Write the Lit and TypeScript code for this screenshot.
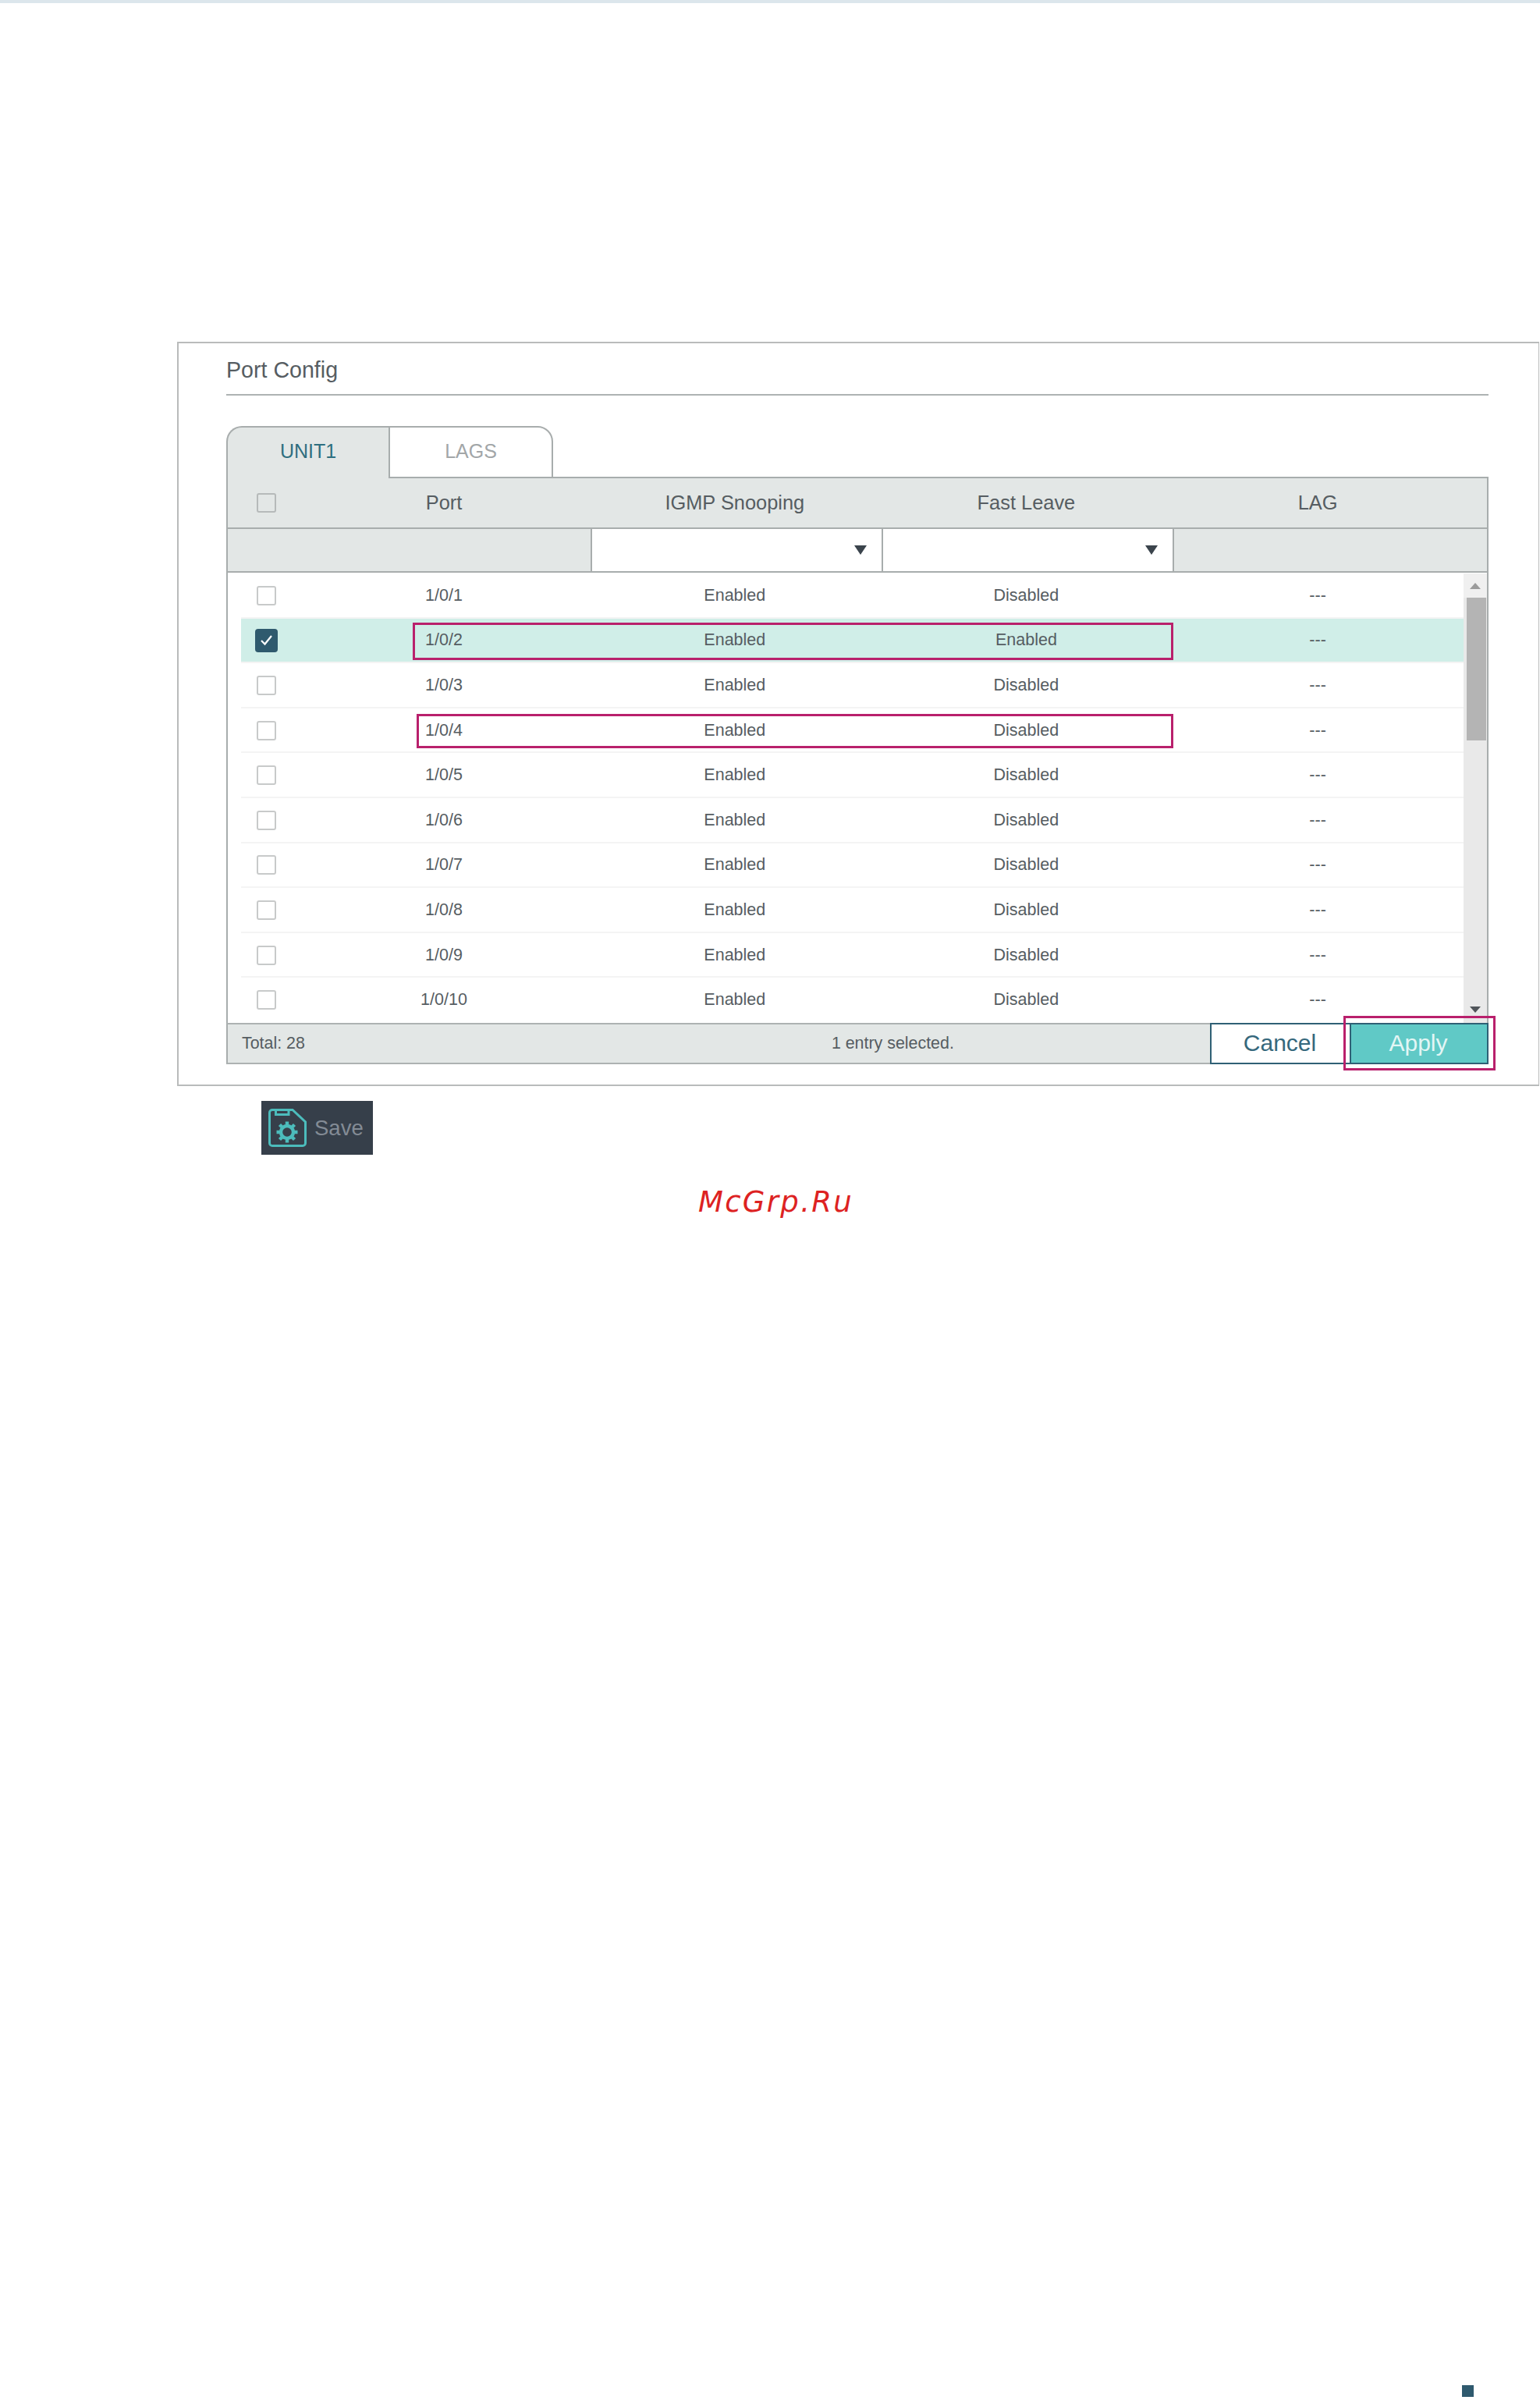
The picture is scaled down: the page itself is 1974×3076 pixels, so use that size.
import { LitElement, html, css } from "lit";
import { customElement } from "lit/decorators.js";

interface PortRow {
  port: string;
  igmp: string;
  fast: string;
  checked?: boolean;
}

const rows: PortRow[] = [
  { port: "1/0/1", igmp: "Enabled", fast: "Disabled" },
  { port: "1/0/2", igmp: "Enabled", fast: "Enabled", checked: true },
  { port: "1/0/3", igmp: "Enabled", fast: "Disabled" },
  { port: "1/0/4", igmp: "Enabled", fast: "Disabled" },
  { port: "1/0/5", igmp: "Enabled", fast: "Disabled" },
  { port: "1/0/6", igmp: "Enabled", fast: "Disabled" },
  { port: "1/0/7", igmp: "Enabled", fast: "Disabled" },
  { port: "1/0/8", igmp: "Enabled", fast: "Disabled" },
  { port: "1/0/9", igmp: "Enabled", fast: "Disabled" },
  { port: "1/0/10", igmp: "Enabled", fast: "Disabled" },
];

@customElement("app-root")
export class AppRoot extends LitElement {
  static styles = css`
    :host {
      display: flex;
      flex-direction: column;
      position: relative;
      height: 3076px;
      background: #fff;
      font-family: "Liberation Sans", Arial, sans-serif;
      color: #565d62;
      overflow: hidden;
    }
    * {
      box-sizing: border-box;
    }

    .topbar {
      height: 4px;
      background: #dce6ec;
    }

    .panel {
      width: 1746px;
      height: 954px;
      margin: 434px 0 0 227px;
      padding: 0 64px 0 61px;
      border: 2px solid #b9bbbb;
      border-right-width: 1px;
    }
    .title {
      height: 67px;
      padding-top: 14px;
      font-size: 28.6px;
      line-height: 40px;
      border-bottom: 2px solid #aeb3b3;
    }

    .tabs {
      display: flex;
      height: 67px;
      margin-top: 39px;
      margin-bottom: -2px;
      position: relative;
    }
    .tab {
      padding-top: 14px;
      text-align: center;
      font-size: 25px;
      line-height: 32px;
      border: 2px solid #a8adad;
    }
    .tab.active {
      width: 208px;
      background: #e3e7e6;
      color: #2f6f80;
      border-right: none;
      border-bottom: none;
      border-top-left-radius: 20px;
    }
    .tab.other {
      width: 211px;
      background: #fff;
      color: #a2a6a8;
      border-top-right-radius: 20px;
      border-bottom: 2px solid #a8adad;
    }

    .head,
    .filters,
    .body,
    .foot-info {
      border-left: 2px solid #a8adad;
    }
    .head,
    .filters,
    .body {
      border-right: 2px solid #a8adad;
    }

    .cols {
      display: grid;
      grid-template-columns: 74px 372px 373.6px 373.6px 373.8px;
      align-items: center;
      text-align: center;
    }
    .head {
      height: 67px;
      padding-left: 17px;
      background: #e3e7e6;
      border-top: 2px solid #a8adad;
      border-bottom: 2px solid #a8adad;
      font-size: 25.4px;
    }
    .filters {
      display: grid;
      grid-template-columns: 465px 373px 375px 1fr;
      height: 56px;
      background: #e3e7e6;
      border-bottom: 2px solid #a8adad;
    }
    .select {
      display: flex;
      align-items: center;
      justify-content: flex-end;
      padding-right: 19px;
      background: #fff;
      border-left: 2px solid #a8adad;
    }
    .select.last {
      border-right: 2px solid #a8adad;
    }
    .caret {
      border-left: 8px solid transparent;
      border-right: 8px solid transparent;
      border-top: 12px solid #3b444c;
    }

    .body {
      display: flex;
      height: 577px;
      padding: 1px 0 0 17px;
    }
    .rows {
      flex: 1;
      display: flex;
      flex-direction: column;
    }
    .row {
      flex: 1;
      padding-top: 1px;
      font-size: 21.5px;
      border-bottom: 2px solid #f4f4f4;
    }
    .row:last-child {
      border-bottom-color: transparent;
    }
    .row.selected {
      background: #d0eee8;
    }

    .check {
      display: flex;
      align-items: center;
      justify-content: center;
      width: 25px;
      height: 25px;
      margin-left: 20px;
      background: #fff;
      border: 2px solid #c8caca;
      border-radius: 3px;
    }
    .head .check {
      background: transparent;
      border-color: #b6baba;
    }
    .check.on {
      width: 29px;
      height: 30px;
      margin-left: 18px;
      background: #2f5a6e;
      border: none;
      border-radius: 4px;
    }
    .check svg {
      width: 17px;
      height: 15px;
    }

    .scroll {
      display: flex;
      flex-direction: column;
      width: 30px;
      background: #e9e9e9;
    }
    .scroll-btn {
      display: flex;
      justify-content: center;
      align-items: center;
      height: 31px;
      background: #f0f0f0;
    }
    .scroll-btn.down {
      height: 34px;
      margin-top: auto;
      background: #e9e9e9;
    }
    .up-arrow {
      border-left: 7px solid transparent;
      border-right: 7px solid transparent;
      border-bottom: 8px solid #9c9c9c;
    }
    .down-arrow {
      border-left: 7px solid transparent;
      border-right: 7px solid transparent;
      border-top: 8px solid #50555a;
    }
    .thumb {
      width: 25px;
      height: 183px;
      margin-left: 4px;
      background: #b4b4b4;
    }

    .footer {
      display: flex;
      height: 53px;
    }
    .foot-info {
      flex: 1;
      display: flex;
      align-items: center;
      padding-left: 18px;
      background: #e3e7e6;
      border-top: 2px solid #adb2b2;
      border-bottom: 2px solid #adb2b2;
      font-size: 21.4px;
    }
    .entries {
      margin-left: 675px;
    }
    .btn {
      width: 179px;
      padding: 0 2px 2px 0;
      font: 30px "Liberation Sans", Arial, sans-serif;
      border: 2px solid #2f6075;
    }
    .btn.cancel {
      background: #fff;
      color: #35687c;
      border-right: none;
    }
    .btn.apply {
      width: 178px;
      background: #60c9c6;
      color: #e3f6f5;
    }

    .save {
      display: flex;
      align-items: center;
      gap: 10px;
      width: 143px;
      height: 69px;
      margin: 19px 0 0 335px;
      padding-left: 9px;
      background: #363f4a;
      color: #838b95;
      font-size: 27.5px;
    }
    .save svg {
      width: 49px;
      height: 49px;
      flex: none;
    }

    .mark {
      margin: 39px 0 0 895px;
      font-family: "DejaVu Sans", sans-serif;
      font-style: italic;
      font-size: 37px;
      line-height: 44px;
      letter-spacing: 2.3px;
      color: #dd2222;
    }

    .page-mark {
      width: 15px;
      height: 15px;
      margin: auto 0 4px 1874px;
      background: #2f5a6e;
    }

    /* callouts drawn on top of the screenshot */
    .callout {
      position: absolute;
      border: 3px solid #b9206c;
      pointer-events: none;
    }
    .callout.row2 {
      left: 529px;
      top: 798px;
      width: 975px;
      height: 48px;
    }
    .callout.row4 {
      left: 534px;
      top: 915px;
      width: 970px;
      height: 44px;
    }
    .callout.apply {
      left: 1722px;
      top: 1302px;
      width: 195px;
      height: 70px;
    }
  `;

  private check(on = false) {
    return html`<span class="check ${on ? "on" : ""}">
      ${on
        ? html`<svg viewBox="0 0 17 15" fill="none" stroke="#fff" stroke-width="2.2">
            <path d="M2 8l4.5 4.5L15 2" />
          </svg>`
        : ""}
    </span>`;
  }

  render() {
    return html`
      <div class="topbar"></div>
      <section class="panel">
        <div class="title">Port Config</div>
        <div class="tabs">
          <div class="tab active">UNIT1</div>
          <div class="tab other">LAGS</div>
        </div>
        <div class="head cols">
          ${this.check()}
          <span>Port</span>
          <span>IGMP Snooping</span>
          <span>Fast Leave</span>
          <span>LAG</span>
        </div>
        <div class="filters">
          <div></div>
          <div class="select"><span class="caret"></span></div>
          <div class="select last"><span class="caret"></span></div>
          <div></div>
        </div>
        <div class="body">
          <div class="rows">
            ${rows.map(
              (r) => html`<div class="row cols ${r.checked ? "selected" : ""}">
                ${this.check(r.checked)}
                <span>${r.port}</span>
                <span>${r.igmp}</span>
                <span>${r.fast}</span>
                <span>---</span>
              </div>`
            )}
          </div>
          <div class="scroll">
            <div class="scroll-btn"><span class="up-arrow"></span></div>
            <div class="thumb"></div>
            <div class="scroll-btn down"><span class="down-arrow"></span></div>
          </div>
        </div>
        <div class="footer">
          <div class="foot-info">
            <span>Total: 28</span>
            <span class="entries">1 entry selected.</span>
          </div>
          <button class="btn cancel">Cancel</button>
          <button class="btn apply">Apply</button>
        </div>
      </section>

      <div class="save">
        <svg viewBox="0 0 49 49" fill="none" stroke="#4cbcbc" stroke-width="3">
          <path d="M5 1.5H31L47.5 17V44a3.5 3.5 0 0 1-3.5 3.5H5A3.5 3.5 0 0 1 1.5 44V5A3.5 3.5 0 0 1 5 1.5Z" />
          <path d="M9.5 1.5V7.5H26V1.5" />
          <circle cx="24" cy="30" r="8" stroke-width="4.4" />
          <path
            d="M24 16.5V22M24 38V43.5M10.5 30H16M32 30H37.5M14.5 20.5L18.3 24.3M29.7 35.7L33.5 39.5M14.5 39.5L18.3 35.7M29.7 24.3L33.5 20.5"
            stroke-width="4.4"
          />
        </svg>
        <span>Save</span>
      </div>

      <div class="mark">McGrp.Ru</div>
      <div class="page-mark"></div>

      <div class="callout row2"></div>
      <div class="callout row4"></div>
      <div class="callout apply"></div>
    `;
  }
}
